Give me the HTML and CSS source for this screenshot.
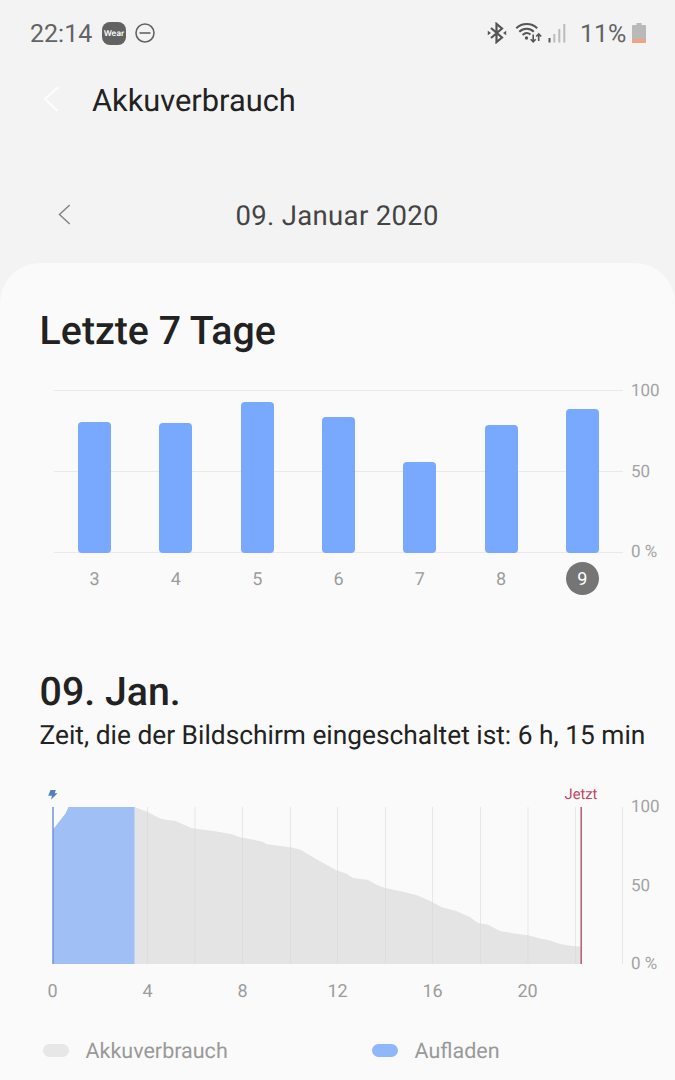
FILE: index.html
```html
<!DOCTYPE html>
<html lang="de">
<head>
<meta charset="utf-8">
<title>Akkuverbrauch</title>
<link rel="stylesheet" href="styles.css">
</head>
<body>
<div class="statusbar">
  <span class="clock">22:14</span>
  <span class="wear">Wear</span>
  <svg class="dnd" width="20" height="20" viewBox="0 0 20 20"><circle cx="10" cy="10" r="9" /><path d="M4.500 10h11"/></svg>
  <svg class="bluetooth" width="20" height="22" viewBox="0 0 20 22"><path d="M4 6l11 9.500-5.500 4.600V1.900L15 6.500 4 16"/><path class="dots" d="M.8 8.800l3.200 2.200-3.200 2.200zM19.200 8.800L16 11l3.200 2.200z"/></svg>
  <svg class="wifi" width="27" height="22" viewBox="0 0 27 22"><path d="M1.300 6.200C7 .6 16.500.6 22.200 6.200M4.300 9.800C8.500 5.800 14.800 5.800 18.800 9.800M7.600 13C10 10.700 13.200 10.700 15.500 12.600"/><circle cx="11.500" cy="16" r="1.700"/><path class="arrows" d="M18.200 12.500v7M15.700 17.300l2.500 2.600 2.500-2.600M23.700 19V12M21.200 14.500l2.500-2.600 2.500 2.600"/></svg>
  <svg class="signal" width="18" height="20" viewBox="0 0 18 20"><path class="on" d="M1.500 15v4.500"/><path d="M6.300 11v8.500M11.300 6v13.500M16.300 1v18.500"/></svg>
  <span class="percent">11%</span>
  <svg class="battery" width="14" height="20" viewBox="0 0 14 20"><path d="M4.500 0h5v2H13q1 0 1 1v16q0 1-1 1H1q-1 0-1-1V3q0-1 1-1h3.500z"/><path class="low" d="M0 16h14v3q0 1-1 1H1q-1 0-1-1z"/></svg>
</div>
<header class="titlebar">
  <svg class="back" width="17" height="26" viewBox="0 0 17 26"><path d="M15.500 1L2 13l12.500 12"/></svg>
  <h1>Akkuverbrauch</h1>
</header>
<nav class="datebar">
  <svg class="prev" width="13" height="21" viewBox="0 0 13 21"><path d="M11.700 1L1.500 10.500l10.200 9.500"/></svg>
  <span class="date">09. Januar 2020</span>
</nav>
<main class="panel">
  <h2>Letzte 7 Tage</h2>
  <section class="week">
    <div class="plot">
      <div class="bars">
        <i class="bar" style="height:130.600px"></i>
        <i class="bar" style="height:130px"></i>
        <i class="bar" style="height:150.600px"></i>
        <i class="bar" style="height:136px"></i>
        <i class="bar" style="height:91.200px"></i>
        <i class="bar" style="height:128px"></i>
        <i class="bar" style="height:143.600px"></i>
      </div>
      <div class="days"><span>3</span><span>4</span><span>5</span><span>6</span><span>7</span><span>8</span><span><b class="today">9</b></span></div>
    </div>
    <div class="scale"><span>100</span><span>50</span><span>0 %</span></div>
  </section>
  <h2 class="day">09. Jan.</h2>
  <p class="screentime">Zeit, die der Bildschirm eingeschaltet ist: 6 h, 15 min</p>
  <section class="history">
    <svg class="curve" width="624" height="180" viewBox="0 785 624 180">
      <path class="grid" d="M100 807v157M147.500 807v157M195 807v157M242.500 807v157M290.500 807v157M337.500 807v157M385.500 807v157M432.500 807v157M480.500 807v157M528 807v157M575.500 807v157M622.500 807v157"/>
      <path class="drain" d="M134.600 807L147.500 812 160 818.500Q164 819.800 175 820.700L192 828.300 215 831.300 232 834.300 240 837.300 262 841.500 267 844.300 290 847.300 300 849.500 323 863 337 870.500 346 873.500 353 878 368 880 376 884.500 385 888 400 891 417 895.300 430 901 442 907.300 457 911.300 470 917.300 478 923 487.500 924.500 500 931 511 933 528 935.300 540 938.500 550 940.500 560 944 572 946 581 946.500V964H134.600z"/>
      <path class="charge" d="M53 829.500L65.500 813.500 68.500 807H134.600V964H53z"/>
      <path class="start" d="M53 807v157"/>
      <path class="now" d="M581.200 807v157"/>
      <path class="bolt" d="M50.500 790h5.300l-1 3.200h2.700l-6.500 6.500 1-4h-3.800z"/>
      <text class="nowlabel" x="581" y="799" text-anchor="middle">Jetzt</text>
    </svg>
    <div class="scale"><span>100</span><span>50</span><span>0 %</span></div>
  </section>
  <div class="hours"><span>0</span><span>4</span><span>8</span><span>12</span><span>16</span><span>20</span></div>
  <div class="legend">
    <span class="item"><i class="swatch"></i>Akkuverbrauch</span>
    <span class="item"><i class="swatch blue"></i>Aufladen</span>
  </div>
</main>
</body>
</html>
```
FILE: styles.css
```css
* { box-sizing: border-box; }
body {
  margin: 0;
  width: 675px;
  height: 1080px;
  overflow: hidden;
  background: #f3f3f3;
  color: #222;
  font-family: Roboto, "Liberation Sans", sans-serif;
  text-rendering: geometricPrecision;
}
h1, h2, p { margin: 0; white-space: nowrap; }
svg { display: block; flex: none; fill: none; }

.statusbar { display: flex; align-items: center; height: 66px; padding-left: 30px; color: #636363; }
.clock { width: 72px; padding-top: 2px; font-size: 25px; }
.wear {
  width: 24px; height: 23px; margin-right: 9px; border-radius: 8px;
  background: #626262; color: #fff;
  font: 600 8px/23px Inter, sans-serif; text-align: center;
}
.dnd { stroke: #636363; stroke-width: 1.600; }
.bluetooth { margin-left: 332px; stroke: #555; stroke-width: 2.200; }
.bluetooth .dots { fill: #555; stroke: none; }
.wifi { margin-left: 8px; stroke: #555; stroke-width: 2; }
.wifi circle { fill: #555; stroke: none; }
.wifi .arrows { stroke-width: 1.600; }
.signal { margin-left: 6px; stroke: #bbb; stroke-width: 2; }
.signal .on { stroke: #555; }
.percent { width: 52px; margin-left: 14px; padding-top: 2px; font-size: 25px; }
.battery { fill: #b9b9b9; }
.battery .low { fill: #f3a184; }

.titlebar { display: flex; align-items: center; height: 70px; padding-left: 43px; }
.back { stroke: #fdfdfd; stroke-width: 2; margin-top: -4px; }
h1 { margin-left: 32px; font-size: 30.800px; font-weight: 400; line-height: 70px; }

.datebar { display: flex; align-items: center; height: 50px; margin-top: 54px; padding-left: 58px; }
.prev { stroke: #858585; stroke-width: 1.500; margin-top: -2px; }
.date { margin-left: 164.500px; color: #444; font-size: 27.500px; letter-spacing: 0.330px; white-space: nowrap; }

.panel { height: 840px; margin-top: 23px; padding: 44px 0 0 40px; border-radius: 40px 40px 0 0; background: #fafafa; }
h2 { margin-left: -0.400px; font-size: 39.300px; font-weight: 500; line-height: 48px; }

.week { display: flex; margin: 35px 0 0 14px; }
.plot { width: 569px; }
.bars {
  display: grid; grid-template-columns: repeat(7, 1fr); place-items: end center;
  height: 163px;
  background: linear-gradient(#e9e9e9, #e9e9e9) 0 0 / 100% 1px no-repeat,
    linear-gradient(#e9e9e9, #e9e9e9) 0 81px / 100% 1px no-repeat,
    linear-gradient(#e9e9e9, #e9e9e9) 0 162px / 100% 1px no-repeat;
}
.bar { width: 33px; border-radius: 4px; background: #78a9ff; }
.days { display: grid; grid-template-columns: repeat(7, 1fr); height: 33px; margin-top: 9px; color: #9c9c9c; font-size: 18px; line-height: 36px; text-align: center; }
.today { display: block; width: 33px; height: 33px; margin: 0 auto; border-radius: 50%; background: #757575; color: #fff; font-weight: 400; }
.scale { display: flex; flex-direction: column; justify-content: space-between; height: 179px; margin: -8px 0 0 8px; color: #a3a3a3; font-size: 17px; line-height: 18px; white-space: nowrap; }

.day { margin-top: 73px; }
.screentime { margin-left: -0.500px; font-size: 26.320px; line-height: 40px; }

.history { display: flex; margin: 29px 0 0 -40px; }
.history .scale { height: 175px; margin: 13px 0 0 7px; }
.grid { stroke: #e7e7e7; }
.drain { fill: #d8d8d8; fill-opacity: .68; }
.charge { fill: #9fbff5; }
.start { stroke: #6f93d6; stroke-width: 1.500; }
.now { stroke: #b55c70; stroke-width: 1.500; }
.bolt { fill: #5580bd; }
.nowlabel { fill: #bd4660; font-size: 14.700px; }
.hours { display: grid; grid-template-columns: repeat(6, 95px); margin-left: -35px; margin-top: 7px; color: #9c9c9c; font-size: 18px; line-height: 24px; text-align: center; }
.legend { display: grid; grid-template-columns: 329px auto; margin: 33px 0 0 3px; color: #999; font-size: 21.500px; line-height: 30px; }
.item { display: flex; align-items: center; gap: 16.500px; }
.swatch { width: 26px; height: 13px; margin-top: -3px; border-radius: 7px; background: #e7e7e7; }
.swatch.blue { background: #8fb7fc; }
```
